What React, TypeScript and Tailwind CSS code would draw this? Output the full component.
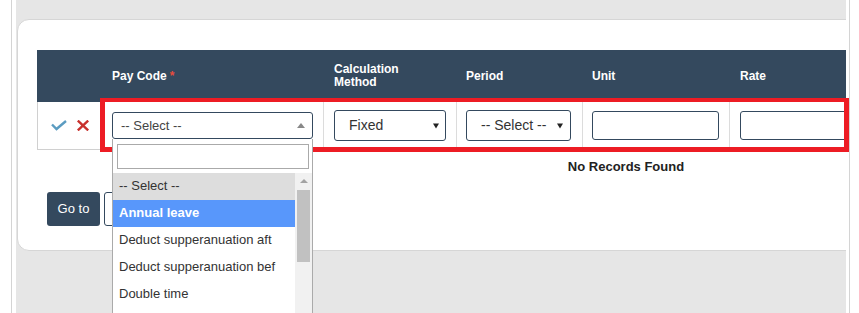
import React from "react";

const CheckIcon = () => (
  <svg width="16" height="11" viewBox="0 0 16 11" className="block">
    <path d="M1 4.5 L5.5 9 L15 1" fill="none" stroke="#5b9cc1" strokeWidth="2.4" strokeLinecap="butt" />
  </svg>
);

const XIcon = () => (
  <svg width="12" height="11" viewBox="0 0 12 11" className="block">
    <path d="M0.8 0.6 L11.2 10.4 M11.2 0.6 L0.8 10.4" fill="none" stroke="#c8312d" strokeWidth="2.4" />
  </svg>
);

const DownArrow = () => (
  <svg width="6" height="6" viewBox="0 0 6 6" className="block">
    <path d="M0 0.5 L6 0.5 L3 5.5 Z" fill="#222" />
  </svg>
);

export default function App() {
  const options = [
    "-- Select --",
    "Annual leave",
    "Deduct supperanuation aft",
    "Deduct supperanuation bef",
    "Double time",
  ];
  return (
    <div className="relative flex h-[313px] w-[859px] overflow-hidden bg-white font-['Liberation_Sans',Arial,sans-serif] text-[13px] text-[#333]">
      <div className="ml-[11px] w-px bg-[#d4d4d4]" />
      <div className="ml-[4px] w-[830px] overflow-hidden bg-[#e6e6e6] pl-px pt-[19px]">
        <div className="w-[1200px] rounded-l-[12px] border border-[#d6d6d6] bg-white pb-[24px] pl-[19px] pt-[30px]">
          {/* Table header */}
          <div className="flex h-[52px] w-[1178px] bg-[#34495e] text-[12px] font-bold leading-[13px] text-white">
            <div className="w-[64px]" />
            <div className="flex w-[222px] items-center pl-[11px]">
              Pay Code<span className="ml-[3px] text-[#e74c3c]">*</span>
            </div>
            <div className="flex w-[133px] items-center pl-[11px]">
              Calculation
              <br />
              Method
            </div>
            <div className="flex w-[126px] items-center pl-[10px]">Period</div>
            <div className="flex w-[147px] items-center pl-[10px]">Unit</div>
            <div className="flex flex-1 items-center pl-[11px]">Rate</div>
          </div>
          {/* Row */}
          <div className="flex h-[48px] w-[1178px] border-b border-l border-[#d0d0d0]">
            <div className="flex w-[63px] items-center gap-[10px] pl-[13px]">
              <CheckIcon />
              <XIcon />
            </div>
            <div className="flex w-[222px] items-center pl-[11px]">
              <div className="relative">
                <div className="flex h-[27px] w-[201px] items-center justify-between rounded-[3px] border border-[#34495e] bg-white pl-[8px] pr-[7px] text-[#444]">
                  <span>-- Select --</span>
                  <span className="mt-[-1px] h-0 w-0 border-x-[4px] border-b-[5px] border-x-transparent border-b-[#888]" />
                </div>
                {/* Dropdown overlay */}
                <div className="absolute left-0 top-[27px] z-10 w-[201px] border-x border-[#aaa] bg-white pt-[5px]">
                  <div className="mb-[4px] ml-[4px] h-[25px] w-[192px] border border-[#aaa] bg-white" />
                  <div className="flex">
                    <div className="w-[182px]">
                      {options.map((o, i) => (
                        <div
                          key={o}
                          className={
                            i === 0
                              ? "flex h-[27px] items-center bg-[#ddd] pb-px pl-[6px] text-[#333]"
                              : i === 1
                              ? "flex h-[27px] items-center bg-[#5897fb] pb-px pl-[6px] font-bold text-white"
                              : "flex h-[27px] items-center pb-px pl-[6px] text-[#333]"
                          }
                        >
                          {o}
                        </div>
                      ))}
                      <div className="h-[30px]" />
                    </div>
                    <div className="relative w-[17px] bg-[#f1f1f1]">
                      <div className="absolute left-[5px] top-[6px] h-0 w-0 border-x-[4px] border-b-[4px] border-x-transparent border-b-[#a3a3a3]" />
                      <div className="absolute left-[2px] top-[17px] h-[72px] w-[13px] bg-[#c1c1c1]" />
                    </div>
                  </div>
                </div>
              </div>
            </div>
            <div className="flex w-[133px] items-center border-l border-[#dcdcdc] pl-[10px]">
              <div className="flex h-[31px] w-[112px] items-center justify-between rounded-[3px] border border-[#34495e] bg-white pl-[14px] pr-[6px] text-[14px] text-[#333]">
                <span>Fixed</span>
                <DownArrow />
              </div>
            </div>
            <div className="flex w-[126px] items-center border-l border-[#dcdcdc] pl-[9px]">
              <div className="flex h-[31px] w-[105px] items-center justify-between rounded-[3px] border border-[#34495e] bg-white pl-[14px] pr-[7px] text-[14px] text-[#333]">
                <span>-- Select --</span>
                <DownArrow />
              </div>
            </div>
            <div className="flex w-[147px] items-center border-l border-[#dcdcdc] pl-[9px]">
              <div className="h-[29px] w-[127px] rounded-[3px] border border-[#34495e] bg-white" />
            </div>
            <div className="flex flex-1 items-center border-l border-[#dcdcdc] pl-[10px]">
              <div className="h-[29px] w-[127px] rounded-[3px] border border-[#34495e] bg-white" />
            </div>
          </div>
          {/* No records */}
          <div className="w-[1178px] pt-[9px] text-center text-[13px] font-bold leading-[16px] text-[#222]">
            No Records Found
          </div>
          {/* Go to */}
          <div className="ml-[10px] mt-[17px] flex gap-[4px]">
            <div className="flex h-[34px] w-[53px] items-center justify-center rounded-[3px] bg-[#34495e] text-[13px] text-white">
              Go to
            </div>
            <div className="h-[34px] w-[60px] rounded-[3px] border border-[#34495e] bg-white" />
          </div>
        </div>
      </div>
      <div className="ml-[3px] w-px bg-[#d4d4d4]" />
      {/* Red highlight annotation */}
      <div className="pointer-events-none absolute left-[100px] top-[98px] h-[54px] w-[749px] border-[5px] border-t-[4px] border-[#ed1c24]" />
    </div>
  );
}
